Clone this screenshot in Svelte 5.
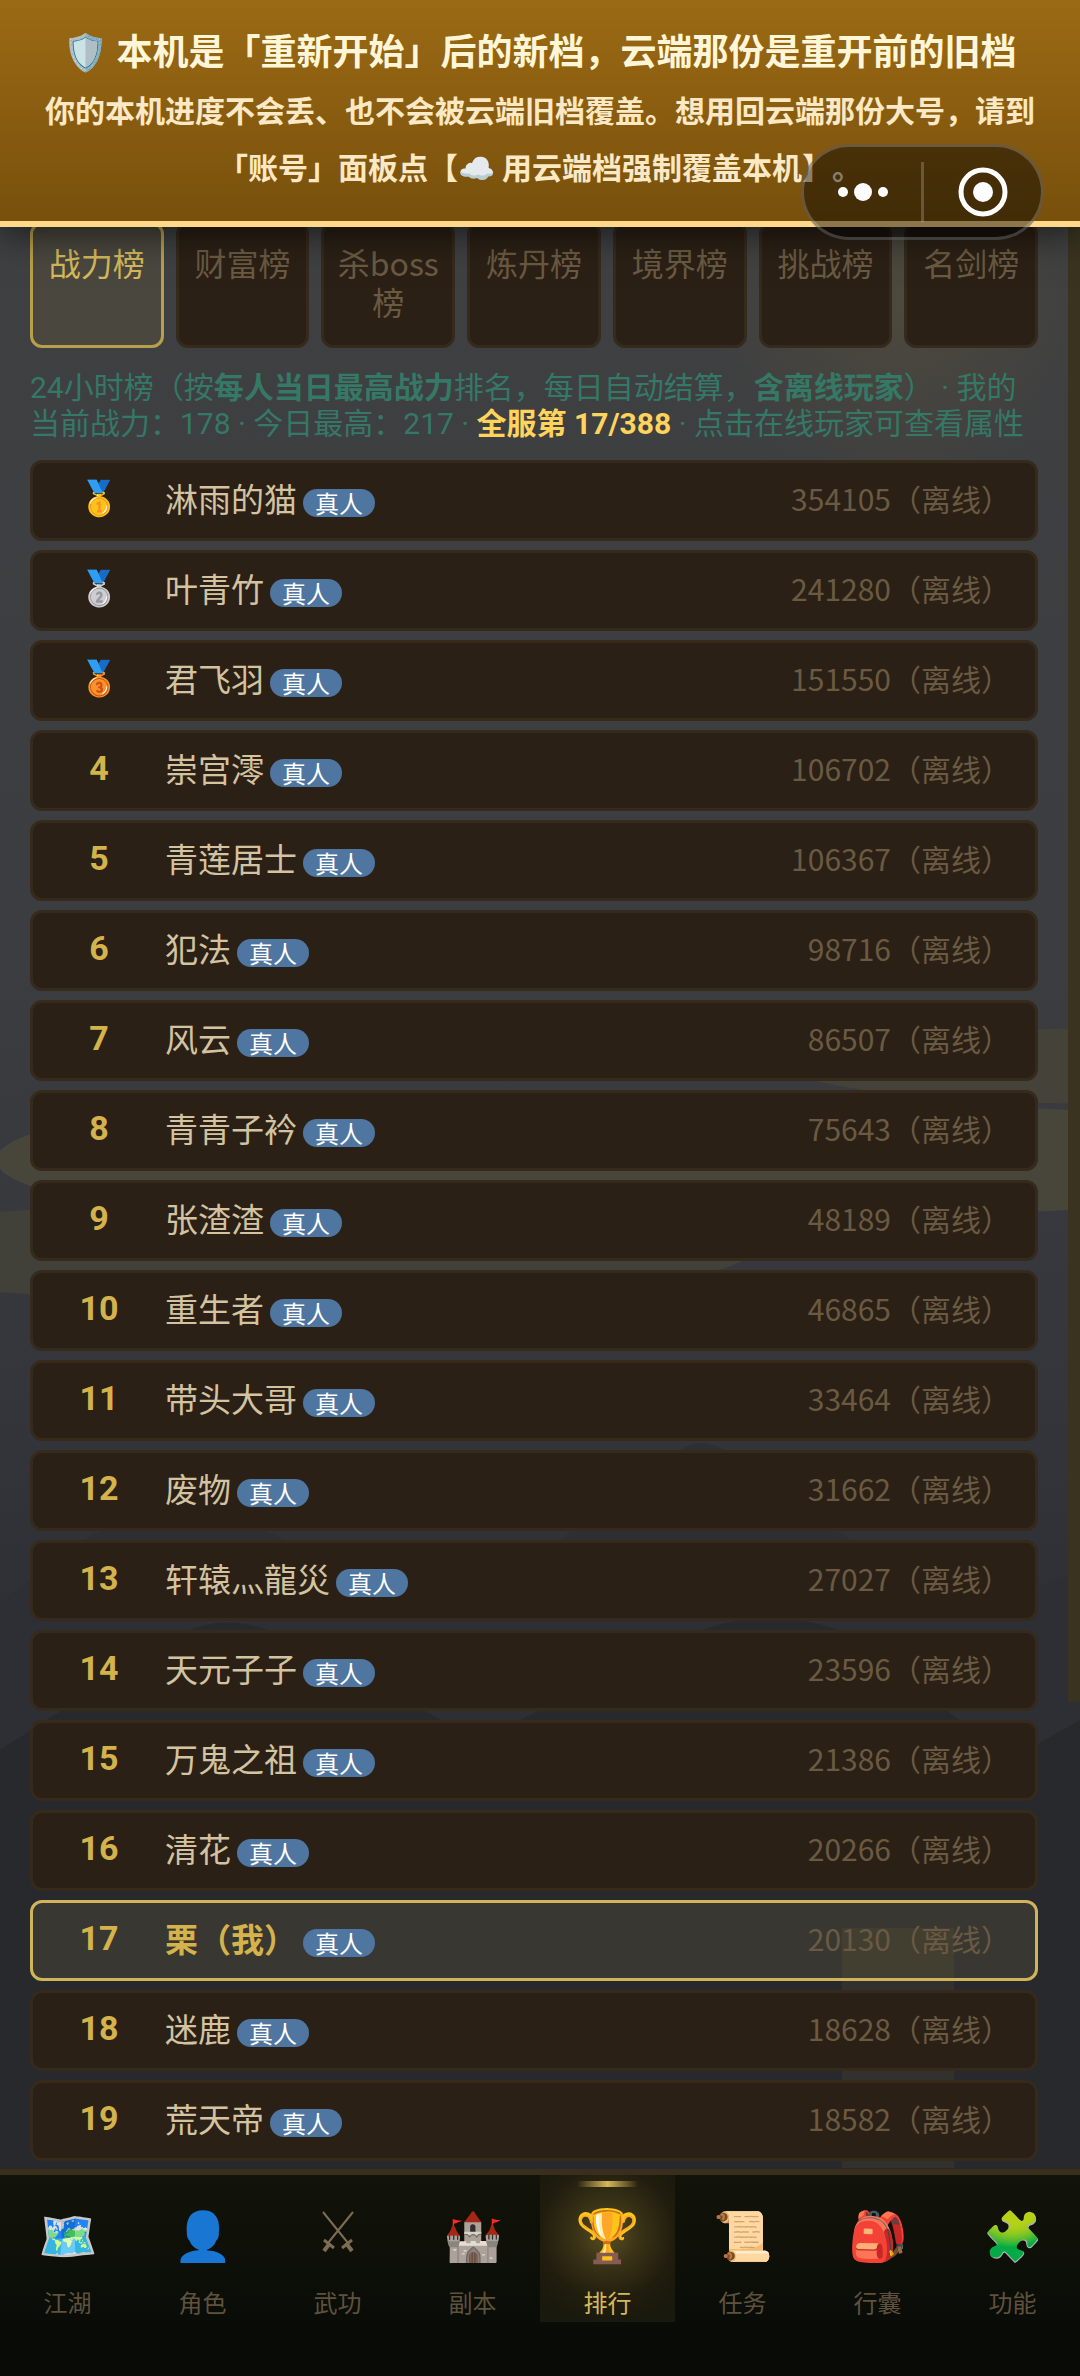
<script lang="ts">
  interface Player {
    name: string;
    power: number;
    me?: boolean;
  }

  const boards = ["战力榜", "财富榜", "杀boss榜", "炼丹榜", "境界榜", "挑战榜", "名剑榜"];
  let activeBoard = $state(0);

  const medals = ["🥇", "🥈", "🥉"];

  const players: Player[] = [
    { name: "淋雨的猫", power: 354105 },
    { name: "叶青竹", power: 241280 },
    { name: "君飞羽", power: 151550 },
    { name: "崇宫澪", power: 106702 },
    { name: "青莲居士", power: 106367 },
    { name: "犯法", power: 98716 },
    { name: "风云", power: 86507 },
    { name: "青青子衿", power: 75643 },
    { name: "张渣渣", power: 48189 },
    { name: "重生者", power: 46865 },
    { name: "带头大哥", power: 33464 },
    { name: "废物", power: 31662 },
    { name: "轩辕灬龍災", power: 27027 },
    { name: "天元子子", power: 23596 },
    { name: "万鬼之祖", power: 21386 },
    { name: "清花", power: 20266 },
    { name: "栗（我）", power: 20130, me: true },
    { name: "迷鹿", power: 18628 },
    { name: "荒天帝", power: 18582 },
  ];

  const navItems = [
    { icon: "🗺️", label: "江湖" },
    { icon: "👤", label: "角色" },
    { icon: "swords", label: "武功" },
    { icon: "🏰", label: "副本" },
    { icon: "🏆", label: "排行" },
    { icon: "📜", label: "任务" },
    { icon: "🎒", label: "行囊" },
    { icon: "🧩", label: "功能" },
  ];
  let activeNav = $state(4);
</script>

<div class="app">
  <svg class="scene" viewBox="0 0 1080 2376" preserveAspectRatio="none" aria-hidden="true">
    <defs>
      <radialGradient id="moon">
        <stop offset="0" stop-color="#6b5c33" stop-opacity=".32" />
        <stop offset="1" stop-color="#6b5c33" stop-opacity="0" />
      </radialGradient>
    </defs>
    <circle cx="900" cy="300" r="190" fill="url(#moon)" />
    <ellipse cx="1120" cy="1066" rx="330" ry="38" fill="#454239" />
    <ellipse cx="280" cy="1252" rx="470" ry="50" fill="#414039" />
    <ellipse cx="258" cy="1160" rx="262" ry="52" fill="#48453a" />
    <ellipse cx="545" cy="1160" rx="540" ry="52" fill="#48453a" />
    <ellipse cx="1000" cy="1160" rx="260" ry="52" fill="#48453a" />
    <path d="M0 1604 L70 1548 Q180 1480 300 1548 L420 1610 L560 1540 L680 1450 Q700 1436 725 1450 L850 1540 L960 1620 L1080 1570 V2376 H0Z" fill="#2d2f34" />
    <path d="M0 1750 L180 1635 Q225 1610 280 1635 L480 1740 L690 1635 Q770 1600 850 1635 L1010 1760 L1080 1720 V2376 H0Z" fill="#27292d" />
    <rect x="842" y="1928" width="112" height="240" fill="#5a4c2c" opacity=".22" />
  </svg>

  <header class="banner">
    <h1>🛡️ 本机是「重新开始」后的新档，云端那份是重开前的旧档</h1>
    <p>你的本机进度不会丢、也不会被云端旧档覆盖。想用回云端那份大号，请到「账号」面板点【☁️ 用云端档强制覆盖本机】。</p>
    <div class="capsule">
      <button type="button" aria-label="更多">
        <svg viewBox="0 0 60 60" width="60" height="60">
          <circle cx="10" cy="30" r="5" /><circle cx="30" cy="30" r="9" /><circle cx="50" cy="30" r="5" />
        </svg>
      </button>
      <span class="divider"></span>
      <button type="button" aria-label="关闭">
        <svg viewBox="0 0 60 60" width="60" height="60">
          <circle class="ring" cx="30" cy="30" r="22" /><circle cx="30" cy="30" r="10" />
        </svg>
      </button>
    </div>
  </header>

  <div class="scroller">
    <main>
      <div class="tabs">
        {#each boards as board, i}
          <button type="button" class="tab" class:active={i === activeBoard} onclick={() => (activeBoard = i)}>{board}</button>
        {/each}
      </div>

      <p class="info">
        24小时榜（按<b>每人当日最高战力</b>排名，每日自动结算，<b>含离线玩家</b>） · 我的当前战力：178 · 今日最高：217 · <b class="mine">全服第 17/388</b> · 点击在线玩家可查看属性
      </p>

      <ol class="list">
        {#each players as player, i}
          <li class="row" class:me={player.me}>
            <span class="rank" class:medal={i < 3}>{medals[i] ?? i + 1}</span>
            <span class="name">{player.name}</span>
            <span class="badge">真人</span>
            <span class="power">{player.power}（离线）</span>
          </li>
        {/each}
      </ol>
    </main>
    <div class="thumb"></div>
  </div>

  <nav>
    {#each navItems as item, i}
      <button type="button" class="nav-item" class:active={i === activeNav} onclick={() => (activeNav = i)}>
        <span class="icon">
          {#if item.icon === "swords"}
            <svg viewBox="0 0 32 42" width="32" height="42">
              <path d="M1 1 L26 32 M31 1 L6 32" stroke-width="2" />
              <path d="M2 29 L12 37 M30 29 L20 37" stroke-width="3" />
              <path d="M8 32 L2 40 M24 32 L30 40" stroke-width="4" />
            </svg>
          {:else}
            {item.icon}
          {/if}
        </span>
        <span class="label">{item.label}</span>
      </button>
    {/each}
  </nav>
</div>

<style>
:global(body) {
  margin: 0;
  background: #090b07;
}
.app {
  position: relative;
  min-height: 100vh;
  display: flex;
  flex-direction: column;
  background: linear-gradient(#404142 0, #3c3d40 40%, #35363c 58%, #222528 85%);
  font-family: "Noto Sans CJK SC", "Noto Sans", sans-serif;
  font-size: 30px;
  text-spacing-trim: space-all;
  color: #d3c3a1;
}
.app button {
  font-family: inherit;
  margin: 0;
  cursor: pointer;
}
.scene {
  position: absolute;
  inset: 0;
  width: 100%;
  height: 100%;
}

.banner {
  position: relative;
  z-index: 2;
  margin-bottom: -5px;
  padding: 22px 30px 26px;
  text-align: center;
  background: linear-gradient(#9b6a14, #78500c);
  border-bottom: 6px solid #ffd88a;
  box-shadow: 0 6px 36px rgba(0, 0, 0, .6);
}
.banner h1 {
  margin: 0;
  font-size: 36px;
  line-height: 54px;
  font-weight: 700;
  color: #fff6d8;
}
.banner p {
  margin: 5px 0 0;
  line-height: 57px;
  font-weight: 700;
  color: #fbe8c4;
}
.capsule {
  position: absolute;
  right: 36px;
  bottom: -19px;
  box-sizing: border-box;
  width: 243px;
  height: 96px;
  display: flex;
  align-items: center;
  border: 3px solid rgba(255, 255, 255, .2);
  border-radius: 48px;
  background: rgba(0, 0, 0, .45);
}
.capsule button {
  flex: 1;
  display: flex;
  justify-content: center;
  padding: 0;
  border: 0;
  background: none;
}
.capsule svg { fill: #fff; }
.capsule .ring { fill: none; stroke: #fff; stroke-width: 5; }
.divider { width: 3px; height: 60px; background: rgba(255, 255, 255, .2); }

.scroller {
  position: relative;
  display: flex;
  align-items: flex-start;
}
main {
  flex: 1;
  min-width: 0;
  padding: 0 30px 8px;
}
.thumb {
  align-self: stretch;
  width: 12px;
  background: linear-gradient(#39331f, #39331f) top / 100% 76% no-repeat;
}

.tabs {
  display: grid;
  grid-template-columns: repeat(7, 1fr);
  gap: 12px;
}
.tab {
  display: flex;
  justify-content: center;
  align-items: flex-start;
  min-width: 0;
  padding: 18px 12px 24px;
  border: 3px solid #352a1c;
  border-radius: 12px;
  background: #2b2015;
  color: #6a5a42;
  font-size: 32px;
  line-height: 39px;
}
.tab.active {
  border-color: #b89f4d;
  background: #49473e;
  color: #d4b85a;
}

.info {
  margin: 22px 0 18px;
  font-family: Roboto, "Noto Sans CJK SC", sans-serif;
  line-height: 36px;
  color: #357866;
}
.info .mine { color: #ffd35c; }

.list {
  display: flex;
  flex-direction: column;
  gap: 9px;
  margin: 0;
  padding: 0;
  list-style: none;
}
.row {
  box-sizing: border-box;
  height: 81px;
  display: flex;
  align-items: center;
  padding: 0 24px 5px;
  border: 3px solid #352a1c;
  border-radius: 12px;
  background: #2b2015;
}
.row.me {
  border-color: #d0b45c;
  background: rgba(212, 184, 90, .1);
}
.rank {
  width: 84px;
  margin-right: 24px;
  text-align: center;
  font-family: Roboto, "Noto Sans CJK SC", sans-serif;
  font-size: 34px;
  font-weight: 700;
  color: #d4b24c;
}
.rank.medal { font-weight: 400; }
.name { font-size: 33px; line-height: 48px; }
.me .name { font-weight: 700; color: #d4b24c; }
.badge {
  margin: 9px 0 0 6px;
  padding: 0 12px;
  border-radius: 14px;
  background: #4f76a0;
  color: #fff;
  font-size: 24px;
  line-height: 28px;
}
.power { margin-left: auto; color: #6a5a42; }

nav {
  position: relative;
  flex: 1;
  box-sizing: border-box;
  min-height: 207px;
  display: grid;
  grid-template-columns: repeat(8, 1fr);
  align-items: start;
  border-top: 6px solid #3a2f1d;
  background: linear-gradient(#12140a, #090b07 80%);
}
.nav-item {
  position: relative;
  height: 147px;
  display: flex;
  flex-direction: column;
  align-items: center;
  padding: 29px 0 0;
  border: 0;
  background: none;
  color: #5f523d;
}
.icon {
  height: 56px;
  display: flex;
  align-items: center;
  font-size: 48px;
  line-height: 56px;
  margin-bottom: 24px;
}
.icon svg { fill: none; stroke: #7d6b52; }
.label { font-size: 24px; line-height: 36px; }
.nav-item.active {
  background: radial-gradient(circle at 50% 40%, #5c5020 0, #3a3317 28%, #211d0e 60%, #1a190d 80%);
  color: #d4b85a;
}
.nav-item.active .icon { font-size: 52px; }
.nav-item.active::before {
  content: "";
  position: absolute;
  top: 6px;
  left: 37px;
  right: 37px;
  height: 6px;
  background: linear-gradient(90deg, transparent, #d4b85a, transparent);
}
</style>
